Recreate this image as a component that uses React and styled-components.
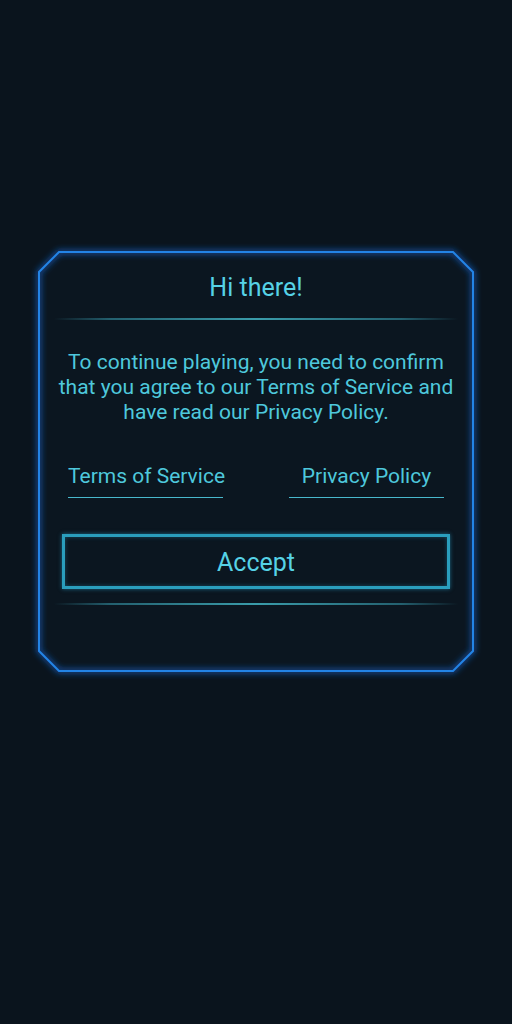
import React from "react";
import styled, { createGlobalStyle } from "styled-components";

const GlobalStyle = createGlobalStyle`
  html, body {
    margin: 0;
    padding: 0;
    background: #0a141d;
  }
  body {
    font-family: Roboto, "Noto Sans", sans-serif;
  }
`;

const Page = styled.div`
  min-height: 1024px;
  background: #0a141d;
  display: flex;
  justify-content: center;
  align-items: flex-start;
  padding-top: 251px;
  box-sizing: border-box;
`;

const Card = styled.div`
  position: relative;
  isolation: isolate;
  width: 436px;
  height: 421px;
  box-sizing: border-box;
  padding: 21px 16px 0;
  display: flex;
  flex-direction: column;
  align-items: center;
`;

const Frame = styled.svg`
  position: absolute;
  inset: 0;
  z-index: -1;
  width: 100%;
  height: 100%;
  overflow: visible;
  pointer-events: none;
`;

const Title = styled.h1`
  margin: 0;
  font-size: 25px;
  line-height: 32px;
  font-weight: 400;
  color: #56d2e6;
`;

const Divider = styled.div`
  align-self: stretch;
  height: 2px;
  margin-top: ${(p) => p.$top}px;
  background: linear-gradient(
    90deg,
    rgba(60, 170, 190, 0) 0%,
    rgba(60, 170, 190, 0.5) 14%,
    rgba(70, 190, 205, 0.8) 50%,
    rgba(60, 170, 190, 0.5) 86%,
    rgba(60, 170, 190, 0) 100%
  );
`;

const Message = styled.p`
  margin: 30px 0 0;
  font-size: 21px;
  line-height: 25px;
  text-align: center;
  color: #4ec8dc;
`;

const Links = styled.div`
  display: flex;
  gap: 66px;
  margin-top: 38px;
`;

const LinkItem = styled.a`
  width: 155px;
  text-align: center;
  font-size: 21px;
  line-height: 26px;
  color: #4ec8dc;
  padding-bottom: 8px;
  border-bottom: 1.5px solid #48b8cc;
  text-decoration: none;
  white-space: nowrap;
`;

const AcceptButton = styled.button`
  margin-top: 36px;
  width: 388px;
  height: 55px;
  box-sizing: border-box;
  background: transparent;
  border: 3px solid #2a9ebd;
  box-shadow: 0 0 4px rgba(40, 160, 200, 0.6), inset 0 0 4px rgba(40, 160, 200, 0.4);
  color: #56d2e6;
  font-family: Roboto, "Noto Sans", sans-serif;
  font-size: 25px;
  padding: 2px 0 0;
  cursor: pointer;
`;

export default function App() {
  const c = 21;
  const w = 436;
  const h = 421;
  const pts = `${c},1 ${w - c},1 ${w - 1},${c} ${w - 1},${h - c} ${w - c},${h - 1} ${c},${h - 1} 1,${h - c} 1,${c}`;
  return (
    <>
      <GlobalStyle />
      <Page>
        <Card>
          <Frame viewBox={`0 0 ${w} ${h}`}>
            <defs>
              <filter id="glow" x="-10%" y="-10%" width="120%" height="120%">
                <feGaussianBlur stdDeviation="3" />
              </filter>
            </defs>
            <polygon points={pts} fill="#0b1620" />
            <polygon points={pts} fill="none" stroke="#1557b0" strokeWidth="4" filter="url(#glow)" />
            <polygon points={pts} fill="none" stroke="#2384e6" strokeWidth="2" />
          </Frame>
          <Title>Hi there!</Title>
          <Divider $top={14} />
          <Message>
            To continue playing, you need to confirm
            <br />
            that you agree to our Terms of Service and
            <br />
            have read our Privacy Policy.
          </Message>
          <Links>
            <LinkItem>Terms of Service</LinkItem>
            <LinkItem>Privacy Policy</LinkItem>
          </Links>
          <AcceptButton>Accept</AcceptButton>
          <Divider $top={14} />
        </Card>
      </Page>
    </>
  );
}
